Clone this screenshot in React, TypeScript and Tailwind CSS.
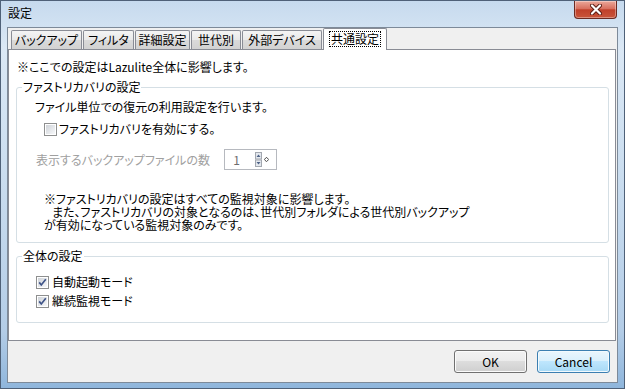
const jp = "font-['Noto_Sans_CJK_JP','Noto_Sans',sans-serif] [font-feature-settings:'palt']";

const tabs = [
  { label: "バックアップ", w: "w-[71px]" },
  { label: "フィルタ", w: "w-[51px]" },
  { label: "詳細設定", w: "w-[55px]" },
  { label: "世代別", w: "w-[50px]" },
  { label: "外部デバイス", w: "w-[80px]" },
];

function CheckBox({ checked }: { checked: boolean }) {
  return (
    <svg width="13" height="13" viewBox="0 0 13 13" className="shrink-0">
      <defs>
        <linearGradient id="cbg" x1="0" y1="0" x2="1" y2="1">
          <stop offset="0" stopColor="#cfd3d8" />
          <stop offset="1" stopColor="#f7f8fa" />
        </linearGradient>
      </defs>
      <rect x="0.5" y="0.5" width="12" height="12" fill="#fff" stroke="#8e8f8f" />
      <rect x="2" y="2" width="9" height="9" fill="url(#cbg)" />
      {checked && (
        <path d="M3.2 6.4 L5.3 9 L9.8 3.3" fill="none" stroke="#3f5488" strokeWidth="1.7" />
      )}
    </svg>
  );
}

function Spinner() {
  return (
    <div className="flex h-[21px] w-[53px] items-center justify-end border border-[#b6b9bf] bg-white pr-[7px]">
      <span className="mr-[15px] text-[12px] leading-4 text-[#6d6d6d]">1</span>
      <svg width="7" height="15" viewBox="0 0 7 15">
        <rect x="0.5" y="0.5" width="6" height="6.5" fill="#e4e8ee" stroke="#a3a8b0" />
        <rect x="0.5" y="8" width="6" height="6.5" fill="#e4e8ee" stroke="#a3a8b0" />
        <path d="M1.5 5 L3.5 2.5 L5.5 5 Z" fill="#4d6185" />
        <path d="M1.5 10 L3.5 12.5 L5.5 10 Z" fill="#4d6185" />
      </svg>
      <svg width="5" height="5" viewBox="0 0 5 5" className="ml-[2px]">
        <path d="M2.5 0.3 L4.7 2.5 L2.5 4.7 L0.3 2.5 Z" fill="#fff" stroke="#333" strokeWidth="0.9" />
      </svg>
    </div>
  );
}

export default function App() {
  return (
    <div
      className={`${jp} flex h-[389px] w-[625px] flex-col overflow-hidden border border-[#4f6178] bg-[linear-gradient(to_bottom,#c6daee,#dbe8f5_12%,#cddff0_40%,#b4cde7_85%,#8fb6dc)] text-[12px] text-black`}
    >
      {/* title bar */}
      <div className="flex h-[26px] shrink-0 items-start justify-between pl-[7px] pr-[7px]">
        <span className="mt-[4px] leading-4">設定</span>
        <div className="flex h-[18px] w-[43px] items-center justify-center rounded-b-[4px] border border-t-0 border-[#6b2a22] bg-[linear-gradient(to_bottom,#eba89a,#d8705f_45%,#c0402a_52%,#c9553b)] shadow-[inset_0_0_0_1px_rgba(255,255,255,0.35)]">
          <svg width="12" height="11" viewBox="0 0 12 11">
            <path d="M2 1.5 L10 9.5 M10 1.5 L2 9.5" stroke="#5a1b12" strokeWidth="4" strokeLinecap="round" />
            <path d="M2 1.5 L10 9.5 M10 1.5 L2 9.5" stroke="#fff" strokeWidth="2.2" strokeLinecap="round" />
          </svg>
        </div>
      </div>

      {/* client area */}
      <div className="ml-[6px] mr-[6px] flex h-[356px] shrink-0 flex-col border border-[#7d8a99] bg-[#f0f0f0]">
        {/* tab strip */}
        <div className="flex h-[21px] items-end gap-px pl-[3px]">
          {tabs.map((t) => (
            <div
              key={t.label}
              className={`${t.w} flex h-[19px] items-center justify-center rounded-t-[2px] border border-b-0 border-[#898c95] bg-[linear-gradient(to_bottom,#f4f4f4,#e9e9e9_50%,#dadada_52%,#d2d2d2)] leading-4`}
            >
              {t.label}
            </div>
          ))}
          <div className="relative z-10 -mb-px flex h-[22px] w-[64px] items-start justify-center rounded-t-[2px] border border-b-0 border-[#898c95] bg-white pt-[2px]">
            <span className="border border-dotted border-black px-[1px] leading-[14px]">共通設定</span>
          </div>
        </div>

        {/* tab panel */}
        <div className="mr-[1px] flex h-[292px] flex-col border border-[#898c95] bg-white">
          <div className="ml-[8px] mt-[9px] leading-4">※ここでの設定はLazulite全体に影響します。</div>

          <fieldset className="ml-[7px] mr-[6px] mt-[4px] rounded-[3px] border border-[#d5dfe5] pb-[11px] pl-[5px] pr-2">
            <legend className="px-[1px] leading-4">ファストリカバリの設定</legend>
            <div className="ml-[13px] mt-[4px] leading-4">ファイル単位での復元の利用設定を行います。</div>
            <label className="ml-[22px] mt-[6px] flex items-center gap-[2px] leading-4">
              <CheckBox checked={false} />
              <span>ファストリカバリを有効にする。</span>
            </label>
            <div className="mt-[12px] flex h-[21px] items-center">
              <span className="ml-[14px] w-[188px] leading-4 text-[#a0a0a0]">表示するバックアップファイルの数</span>
              <Spinner />
            </div>
            <div className="ml-[22px] mt-[22px] flex flex-col">
              <span className="h-[13px] leading-[13px]">※ファストリカバリの設定はすべての監視対象に影響します。</span>
              <span className="h-[13px] pl-[8px] leading-[13px]">また、ファストリカバリの対象となるのは、世代別フォルダによる世代別バックアップ</span>
              <span className="h-[13px] leading-[13px]">が有効になっている監視対象のみです。</span>
            </div>
          </fieldset>

          <fieldset className="ml-[7px] mr-[6px] mt-[5px] rounded-[3px] border border-[#d5dfe5] pb-[13px] pl-[5px] pr-2">
            <legend className="px-[1px] leading-4">全体の設定</legend>
            <label className="ml-[14px] mt-[10px] flex items-center gap-[3px] leading-4">
              <CheckBox checked={true} />
              <span>自動起動モード</span>
            </label>
            <label className="ml-[14px] mt-[3px] flex items-center gap-[3px] leading-4">
              <CheckBox checked={true} />
              <span>継続監視モード</span>
            </label>
          </fieldset>
        </div>

        {/* buttons */}
        <div className="flex flex-1 items-start justify-end gap-[10px] pr-[7px] pt-[9px]">
          <button className="h-[23px] w-[73px] rounded-[3px] border border-[#707070] bg-[linear-gradient(to_bottom,#f2f2f2,#ebebeb_50%,#dddddd_50%,#cfcfcf)] leading-4 shadow-[inset_0_0_0_1px_#fbfbfb]">
            OK
          </button>
          <button className="h-[23px] w-[73px] rounded-[3px] border border-[#3c7fb1] bg-[linear-gradient(to_bottom,#eaf6fd,#d9f0fc_50%,#bee6fd_50%,#a7d9f5)] leading-4 shadow-[inset_0_0_0_1px_#f2fafe]">
            Cancel
          </button>
        </div>
      </div>
    </div>
  );
}
